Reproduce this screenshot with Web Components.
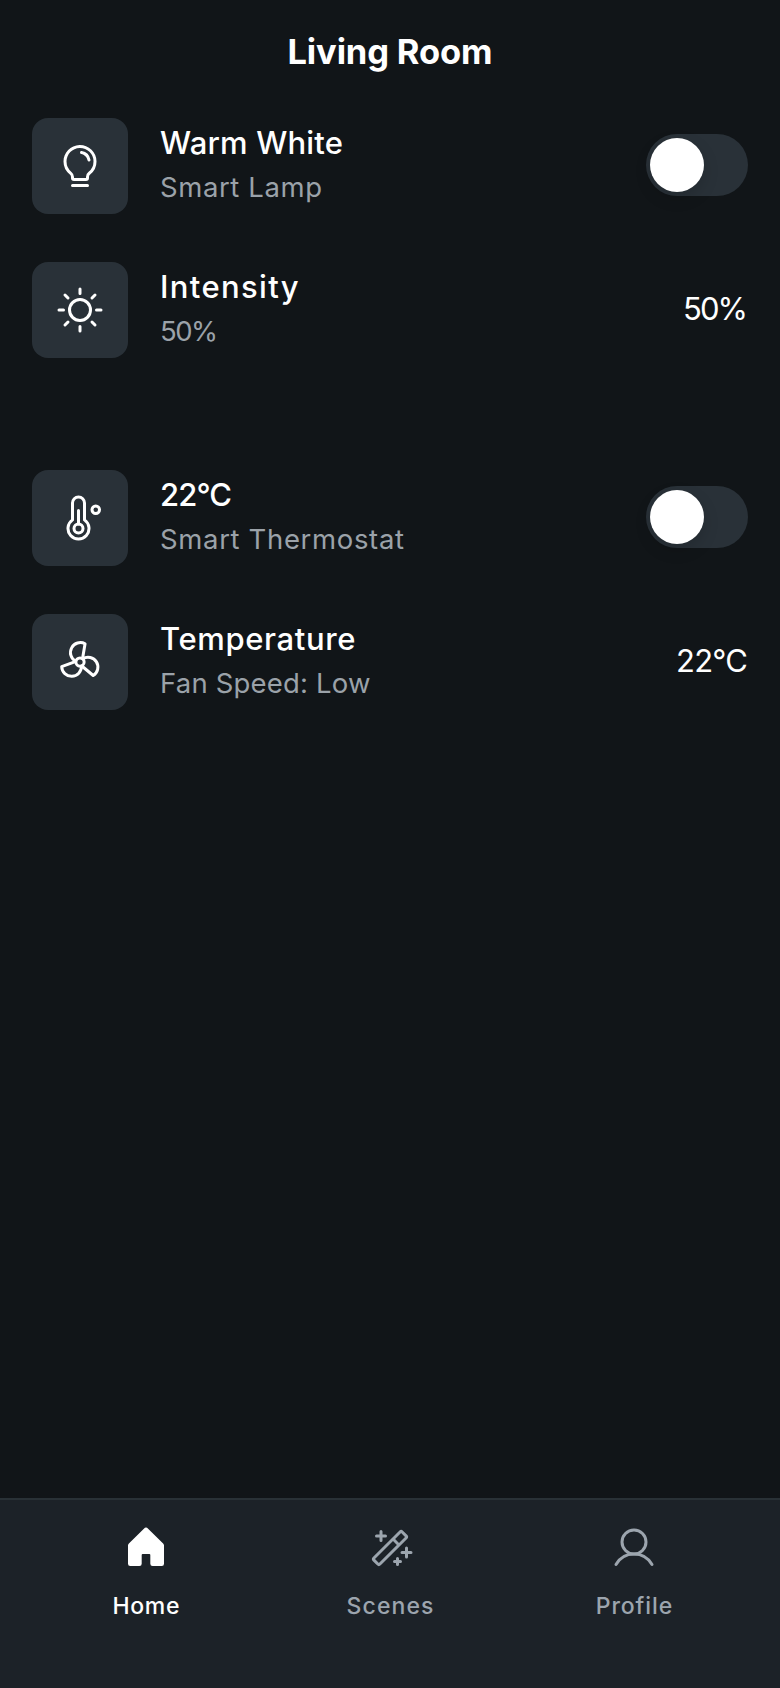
<!DOCTYPE html>
<html lang="en">
<head>
<meta charset="utf-8">
<title>Living Room</title>
<style>
html,body{margin:0;height:100%;background:#111518}
body{font-family:Inter,"Liberation Sans",sans-serif;color:#fff;-webkit-font-smoothing:antialiased}
</style>
</head>
<body>
<room-screen>
  <fit-text slot="title" measure="205">Living Room</fit-text>
  <device-row icon="bulb">
    <fit-text slot="name" measure="183">Warm White</fit-text>
    <fit-text slot="detail" measure="162">Smart Lamp</fit-text>
    <toggle-switch slot="end"></toggle-switch>
  </device-row>
  <device-row icon="sun">
    <fit-text slot="name" measure="138.5">Intensity</fit-text>
    <fit-text slot="detail" measure="58">50%</fit-text>
    <fit-text slot="end" measure="65">50%</fit-text>
  </device-row>
  <row-gap></row-gap>
  <device-row icon="thermometer">
    <fit-text slot="name" measure="72">22°C</fit-text>
    <fit-text slot="detail" measure="244">Smart Thermostat</fit-text>
    <toggle-switch slot="end"></toggle-switch>
  </device-row>
  <device-row icon="fan">
    <fit-text slot="name" measure="195.5">Temperature</fit-text>
    <fit-text slot="detail" measure="210.5">Fan Speed: Low</fit-text>
    <fit-text slot="end" measure="72">22°C</fit-text>
  </device-row>
  <nav-item slot="nav" icon="home" active><fit-text measure="67">Home</fit-text></nav-item>
  <nav-item slot="nav" icon="wand"><fit-text measure="87">Scenes</fit-text></nav-item>
  <nav-item slot="nav" icon="user"><fit-text measure="76.5">Profile</fit-text></nav-item>
</room-screen>
<script>
const line = (body) => `<g fill="none" stroke="currentColor" stroke-width="16" stroke-linecap="round" stroke-linejoin="round">${body}</g>`;
const blade = 'M142,107 L155,31 A52,52 0 1 0 105,124';
const ICONS = {
  bulb: '<path d="M176,232a8,8,0,0,1-8,8H88a8,8,0,0,1,0-16h80A8,8,0,0,1,176,232Zm40-128a87.55,87.55,0,0,1-33.64,69.21A16.24,16.24,0,0,0,176,186v6a16,16,0,0,1-16,16H96a16,16,0,0,1-16-16v-6a16,16,0,0,0-6.23-12.66A87.59,87.59,0,0,1,40,104.49C39.74,56.83,78.26,17.14,125.88,16A88,88,0,0,1,216,104Zm-16,0a72,72,0,0,0-73.74-72c-39,.92-70.47,33.39-70.26,72.39a71.65,71.65,0,0,0,27.64,56.3A32,32,0,0,1,96,186v6h64v-6a32.15,32.15,0,0,1,12.47-25.35A71.65,71.65,0,0,0,200,104Zm-16.11-9.34a57.6,57.6,0,0,0-46.56-46.55,8,8,0,0,0-2.66,15.78c16.57,2.79,30.63,16.85,33.44,33.45A8,8,0,0,0,176,104a9,9,0,0,0,1.35-.11A8,8,0,0,0,183.89,94.66Z"/>',
  sun: line('<circle cx="128" cy="128" r="56"/><path d="M128,16V40M128,216V240M16,128H40M216,128H240M64,64L48,48M192,64L208,48M64,192L48,208M192,192L208,208"/>'),
  thermometer: line('<circle cx="212" cy="84" r="20"/><circle cx="120" cy="184" r="24"/><path d="M120,160V88M88,138V48a32,32,0,0,1,64,0v90a56,56,0,1,1-64,0Z"/>'),
  fan: line(`<circle cx="128" cy="128" r="22"/><path d="${blade}"/><path d="${blade}" transform="rotate(120 128 128)"/><path d="${blade}" transform="rotate(240 128 128)"/>`),
  home: '<path d="M219.31,103.5l-80-78.8a16,16,0,0,0-22.62,0l-80,78.8A16,16,0,0,0,32,115V212a12,12,0,0,0,12,12H93a12,12,0,0,0,12-12V165a5,5,0,0,1,5-5h36a5,5,0,0,1,5,5v47a12,12,0,0,0,12,12h49a12,12,0,0,0,12-12V115A16,16,0,0,0,219.31,103.5Z"/>',
  wand: '<path d="M48,64a8,8,0,0,1,8-8H72V40a8,8,0,0,1,16,0V56h16a8,8,0,0,1,0,16H88V88a8,8,0,0,1-16,0V72H56A8,8,0,0,1,48,64ZM184,192h-8v-8a8,8,0,0,0-16,0v8h-8a8,8,0,0,0,0,16h8v8a8,8,0,0,0,16,0v-8h8a8,8,0,0,0,0-16Zm56-48H224V128a8,8,0,0,0-16,0v16H192a8,8,0,0,0,0,16h16v16a8,8,0,0,0,16,0V160h16a8,8,0,0,0,0-16ZM219.31,80,80,219.31a16,16,0,0,1-22.62,0L36.68,198.63a16,16,0,0,1,0-22.63L176,36.69a16,16,0,0,1,22.63,0l20.68,20.68A16,16,0,0,1,219.31,80Zm-54.63,32L144,91.31l-96,96L68.68,208ZM208,68.69,187.31,48l-32,32L176,100.69Z"/>',
  user: line('<circle cx="128" cy="96" r="64"/><path d="M32,216c19.37-33.47,54.55-56,96-56s76.63,22.53,96,56"/>')
};
const svg = (name) => `<svg width="48" height="48" viewBox="0 0 256 256" fill="currentColor" aria-hidden="true">${ICONS[name]}</svg>`;

class Base extends HTMLElement {
  connectedCallback() {
    if (!this.shadowRoot) this.attachShadow({mode: 'open'}).innerHTML = this.render();
  }
}

customElements.define('room-screen', class extends Base {
  render() {
    return `<style>
      :host{display:flex;flex-direction:column;width:100%;height:100vh;min-height:1688px;background:#111518}
      header{height:94px;box-sizing:border-box;padding-top:28px;display:flex;justify-content:center;font-size:34.5px;line-height:48px;font-weight:700}
      main{flex:1}
      nav{display:grid;grid-template-columns:repeat(3,1fr);gap:16px;height:190px;box-sizing:border-box;padding:16px 32px 0;border-top:2px solid #293136;background:#1c2228}
    </style><header><slot name="title"></slot></header><main><slot></slot></main><nav><slot name="nav"></slot></nav>`;
  }
});

customElements.define('row-gap', class extends Base {
  render() { return '<style>:host{display:block;height:64px}</style>'; }
});

customElements.define('device-row', class extends Base {
  render() {
    return `<style>
      :host{display:flex;align-items:center;gap:32px;height:144px;box-sizing:border-box;padding:0 32px}
      .tile{width:96px;height:96px;border-radius:16px;background:#293138;display:grid;place-items:center}
      svg{display:block}
      .copy{flex:1;height:96px}
      .name,.detail{display:flex}
      .name{font-size:31px;line-height:48px;font-weight:500;padding-top:1px}
      .detail{font-size:27.5px;line-height:42px;font-weight:400;color:#9ba2a9;margin-top:-1px}
      .end{font-size:31px;line-height:48px;font-weight:400;display:flex}
      .end ::slotted(fit-text){margin-bottom:2px}
    </style><div class="tile">${svg(this.getAttribute('icon'))}</div>
    <div class="copy"><div class="name"><slot name="name"></slot></div><div class="detail"><slot name="detail"></slot></div></div>
    <div class="end"><slot name="end"></slot></div>`;
  }
});

customElements.define('toggle-switch', class extends Base {
  render() {
    return `<style>
      :host{display:flex;width:102px;height:62px;box-sizing:border-box;padding:4px;border-radius:31px;background:#293138;margin-bottom:2px}
      i{width:54px;height:54px;border-radius:50%;background:#fff;box-shadow:0 6px 16px rgba(0,0,0,.15)}
    </style><i></i>`;
  }
});

customElements.define('nav-item', class extends Base {
  render() {
    return `<style>
      :host{display:flex;flex-direction:column;align-items:center;gap:8px;color:#9ca5ae}
      :host([active]){color:#fff}
      .icon{height:64px;display:grid;place-items:center}
      svg{display:block}
      .label{font-size:23px;line-height:36px;font-weight:500}
    </style><div class="icon">${svg(this.getAttribute('icon'))}</div><div class="label"><slot></slot></div>`;
  }
});

/* Tracks its text so that the line takes the width given in "measure". */
customElements.define('fit-text', class extends Base {
  connectedCallback() {
    super.connectedCallback();
    const want = parseFloat(this.getAttribute('measure'));
    const have = this.getBoundingClientRect().width;
    const gap = (want - have) / (this.textContent.length - 1);
    this.style.letterSpacing = gap + 'px';
    this.style.marginRight = -gap + 'px';
  }
  render() { return '<style>:host{display:inline-block;white-space:nowrap}</style><slot></slot>'; }
});
</script>
</body>
</html>
